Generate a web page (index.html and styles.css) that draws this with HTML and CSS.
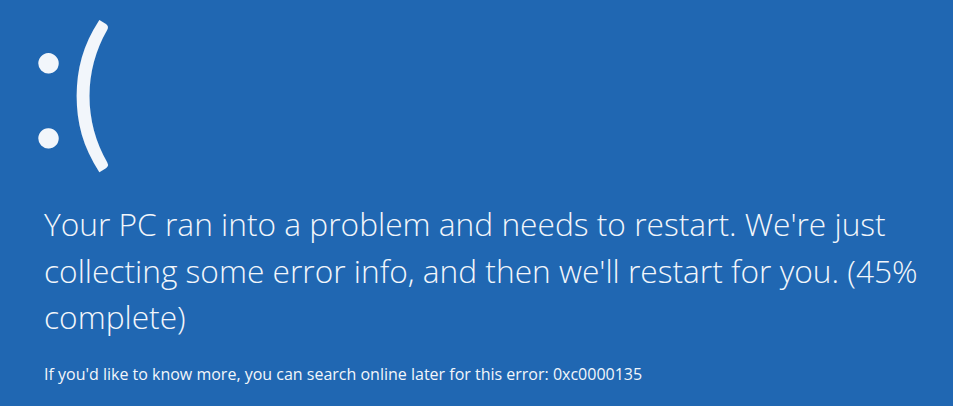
FILE: index.html
```html
<!DOCTYPE html>
<html lang="en">
<head>
<meta charset="utf-8">
<title>Your PC ran into a problem</title>
<link rel="stylesheet" href="styles.css">
</head>
<body>
<main class="screen">
  <div class="face" aria-label="sad face"><span class="colon">:</span><span class="paren">(</span></div>
  <p class="message">Your PC ran into a problem and needs to restart. We're just collecting some error info, and then we'll restart for you. (45% complete)</p>
  <p class="details">If you'd like to know more, you can search online later for this error: 0xc0000135</p>
</main>
</body>
</html>
```
FILE: styles.css
```css
html, body {
  margin: 0;
  padding: 0;
  background: #2067b2;
}
body {
  width: 953px;
  height: 406px;
  overflow: hidden;
  color: #f2f6fb;
  font-family: "Open Sans", "Liberation Sans", sans-serif;
}
.screen {
  padding: 0 0 0 44px;
  display: flex;
  flex-direction: column;
}
.face {
  display: flex;
  align-items: flex-start;
  height: 201px;
  line-height: 1;
  font-family: Lato, "Open Sans", sans-serif;
}
.colon {
  font-size: 188px;
  font-weight: 300;
  -webkit-text-stroke: 3px #f2f6fb;
  margin-top: -21px;
  margin-left: -18px;
}
.paren {
  font-size: 165px;
  font-weight: 400;
  margin-top: 2px;
  margin-left: -2px;
}
.message {
  margin: 0;
  width: 900px;
  font-size: 31.7px;
  font-weight: 300;
  line-height: 46.5px;
}
.details {
  margin: 22px 0 0;
  font-size: 16px;
  font-weight: 400;
}
```
